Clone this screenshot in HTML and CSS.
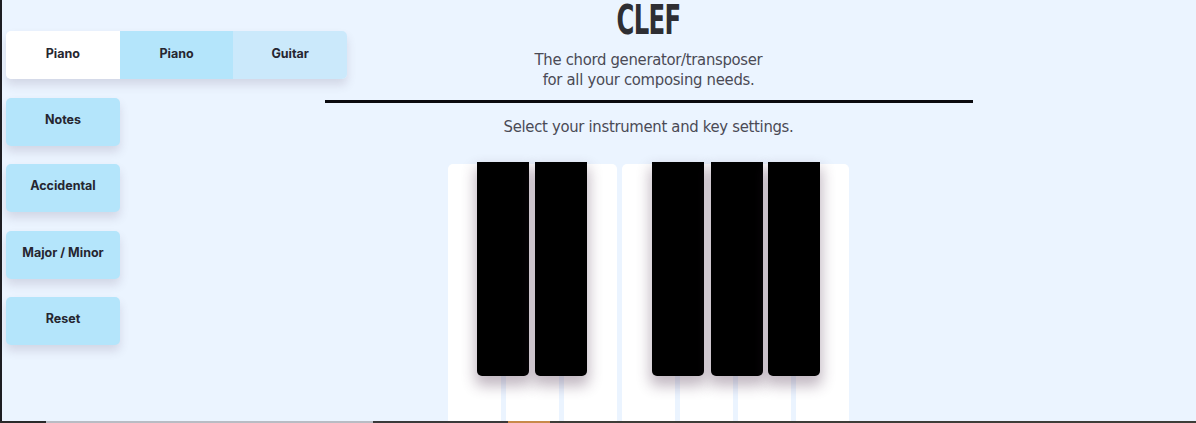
FILE: index.html
```html
<!DOCTYPE html>
<html lang="en">
<head>
<meta charset="utf-8">
<title>Clef</title>
<link rel="stylesheet" href="styles.css">
</head>
<body>
<div class="frame">
  <aside class="side">
    <nav class="tabs">
      <button class="tab tab-active">Piano</button>
      <button class="tab tab-sel">Piano</button>
      <button class="tab tab-alt">Guitar</button>
    </nav>
    <div class="controls">
      <button class="ctrl">Notes</button>
      <button class="ctrl">Accidental</button>
      <button class="ctrl">Major / Minor</button>
      <button class="ctrl">Reset</button>
    </div>
  </aside>
  <main class="main">
    <h1 class="title"><span class="title-text">CLEF</span></h1>
    <p class="sub">The chord generator/transposer<br>for all your composing needs.</p>
    <hr class="rule">
    <p class="prompt">Select your instrument and key settings.</p>
    <div class="piano">
      <div class="whites">
        <div class="white"></div><div class="white"></div><div class="white"></div><div class="white"></div><div class="white"></div><div class="white"></div><div class="white"></div>
      </div>
      <div class="black b1"></div>
      <div class="black b2"></div>
      <div class="black b3"></div>
      <div class="black b4"></div>
      <div class="black b5"></div>
    </div>
  </main>
</div>
<div class="player-bar"><span class="pb-a"></span><span class="pb-b"></span><span class="pb-c"></span><span class="pb-d"></span><span class="pb-e"></span></div>
</body>
</html>
```

FILE: styles.css
```css
* { box-sizing: border-box; }
html, body { margin: 0; padding: 0; }
body {
  background: #ebf4ff;
  height: 423px;
  overflow: hidden;
  border-left: 2px solid #1d1d22;
  font-family: Inter, "Noto Sans", sans-serif;
}
.frame {
  display: flex;
  align-items: flex-start;
}
.side {
  width: 118px;
  flex: none;
  padding-left: 4px;
  padding-top: 31px;
}
.tabs {
  display: flex;
  width: 341px;
  border-radius: 5px;
  box-shadow: 0 6px 10px rgba(90, 70, 100, 0.16);
}
.tab, .ctrl {
  border: 0;
  font-family: Inter, "Noto Sans", sans-serif;
  font-weight: 700;
  font-size: 12.5px;
  color: #262630;
  cursor: pointer;
}
.tab {
  flex: 1;
  height: 48px;
  padding: 0 0 4px;
}
.tab-active { background: #ffffff; border-radius: 5px 0 0 5px; }
.tab-sel { background: #b4e5fb; }
.tab-alt { background: #cbe9fb; border-radius: 0 5px 5px 0; }
.controls {
  display: flex;
  flex-direction: column;
  gap: 18.33px;
  margin-top: 19px;
}
.ctrl {
  width: 114px;
  height: 48px;
  background: #b4e5fb;
  border-radius: 5px;
  padding: 0 0 5px;
  box-shadow: 0 6px 10px rgba(90, 70, 100, 0.16);
}
.main {
  flex: 1;
  padding-right: 19px;
  display: flex;
  flex-direction: column;
  align-items: center;
}
.title {
  margin: 0;
  font-family: "DejaVu Sans Condensed", "DejaVu Sans", sans-serif;
  font-weight: 700;
  font-size: 41px;
  line-height: 40px;
  color: #2e2e33;
  padding: 0 4px;
}
.title-text {
  display: inline-block;
  transform: scaleX(0.66);
  letter-spacing: -1px;
}
.sub {
  margin: 10px 0 0;
  font-family: "DejaVu Sans Condensed", "DejaVu Sans", sans-serif;
  font-size: 16.5px;
  letter-spacing: -0.3px;
  line-height: 20px;
  color: #4a4a55;
  text-align: center;
}
.rule {
  width: 648px;
  height: 3px;
  border: 0;
  background: #0a0a0f;
  margin: 10px 0 0;
}
.prompt {
  margin: 14px 0 0;
  font-family: "DejaVu Sans Condensed", "DejaVu Sans", sans-serif;
  font-size: 16.5px;
  letter-spacing: -0.3px;
  line-height: 20px;
  color: #4a4a55;
}
.piano {
  position: relative;
  width: 401px;
  margin-top: 25px;
}
.whites {
  display: flex;
  gap: 5px;
  padding-top: 2px;
}
.white {
  width: 53px;
  height: 280px;
  background: #ffffff;
  border-radius: 5px 5px 0 0;
}
.black {
  position: absolute;
  top: 0;
  width: 52px;
  height: 214px;
  background: #000000;
  border-radius: 0 0 5px 5px;
  box-shadow: 0 8px 14px 2px rgba(70, 40, 70, 0.33);
}
.b1 { left: 29px; }
.b2 { left: 87px; }
.b3 { left: 204px; }
.b4 { left: 263px; }
.b5 { left: 320px; }
.player-bar {
  position: fixed;
  left: 0;
  right: 0;
  bottom: 0;
  height: 2px;
  display: flex;
}
.player-bar span { height: 2px; }
.pb-a { width: 46px; background: #2a2a2a; }
.pb-b { width: 327px; background: #b9bcc4; }
.pb-c { width: 135px; background: #3a3a3a; }
.pb-d { width: 42px; background: #c88a4a; }
.pb-e { flex: 1; background: #3e3d38; }
```
